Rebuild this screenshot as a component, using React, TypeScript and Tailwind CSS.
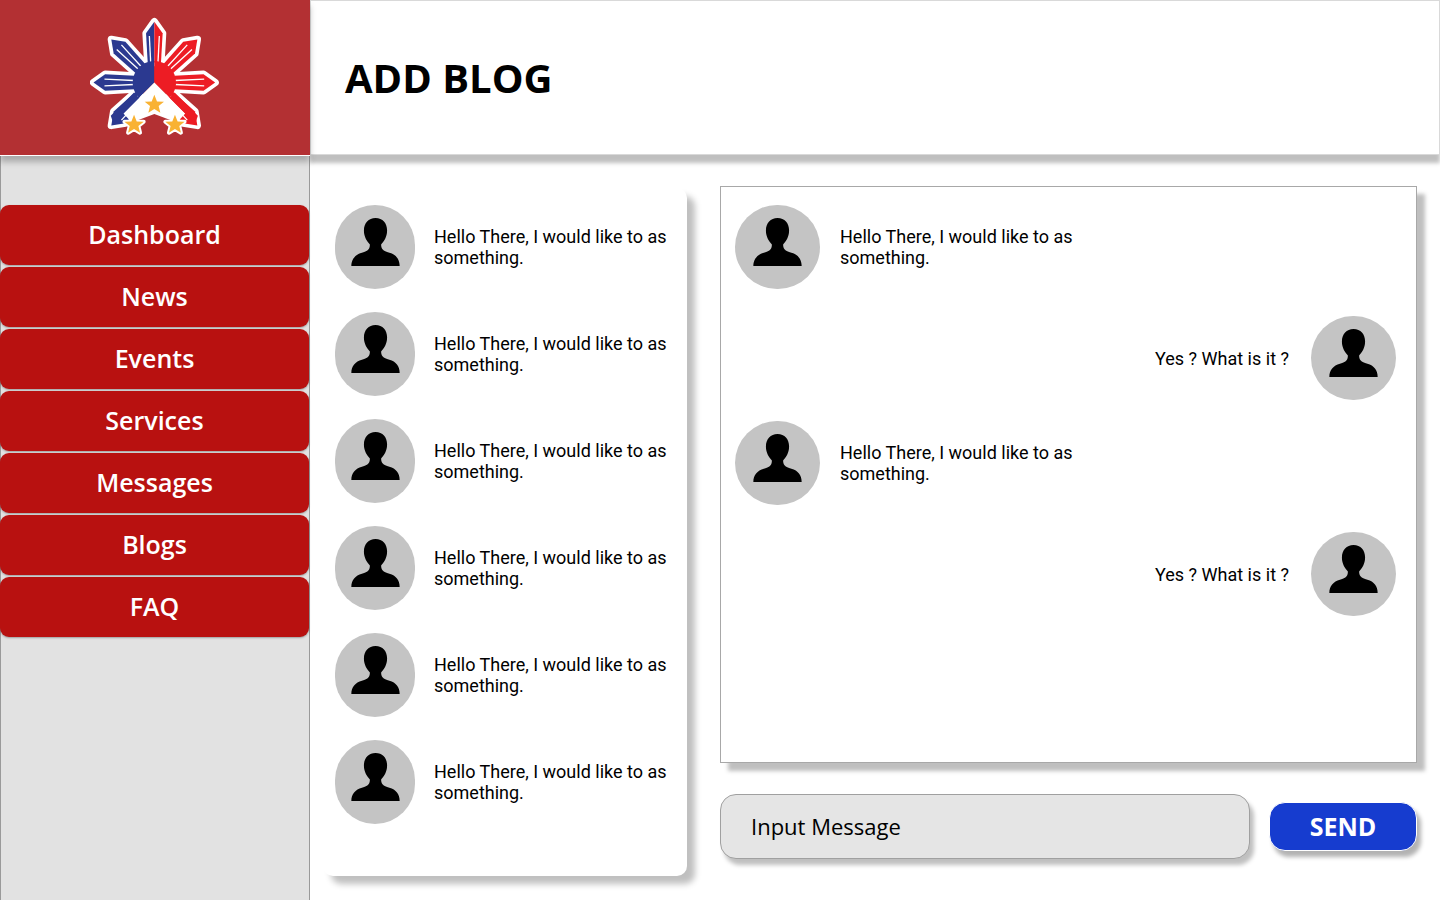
const navItems = ['Dashboard', 'News', 'Events', 'Services', 'Messages', 'Blogs', 'FAQ']
const inbox = [0, 1, 2, 3, 4, 5]

const headingFont = "font-['Open_Sans','Noto_Sans',sans-serif]"

function Ray({ angle, color }: { angle: number; color: string }) {
  return (
    <g transform={`translate(283 245) rotate(${angle})`}>
      <path d="M0 -183 L-25 -148 L-20 -60 L20 -60 L25 -148 Z" fill={color} />
      <path d="M-10 -150 L-6 -62 M10 -150 L6 -62" stroke="#fff" strokeWidth="4" fill="none" />
    </g>
  )
}

function Star({ x, y }: { x: number; y: number }) {
  return (
    <polygon
      transform={`translate(${x} ${y})`}
      points="0,-30 8,-10 29,-9 13,4 18,24 0,13 -18,24 -13,4 -29,-9 -8,-10"
      fill="#f9b233"
      stroke="#fff"
      strokeWidth="12"
      strokeLinejoin="round"
      paintOrder="stroke"
    />
  )
}

function Logo() {
  return (
    <svg viewBox="90 45 390 370" className="h-[123px] w-[130px]" aria-hidden>
      <g stroke="#fff" strokeWidth="22" strokeLinejoin="round">
        {[-135, -90, -45, 0, 45, 90, 135].map((a) => (
          <g key={a} transform={`translate(283 245) rotate(${a})`}>
            <path d="M0 -183 L-25 -148 L-20 -60 L20 -60 L25 -148 Z" fill="#fff" />
          </g>
        ))}
      </g>
      <Ray angle={-135} color="#2b3990" />
      <Ray angle={-90} color="#2b3990" />
      <Ray angle={-45} color="#2b3990" />
      <Ray angle={45} color="#ed1c24" />
      <Ray angle={90} color="#ed1c24" />
      <Ray angle={135} color="#ed1c24" />
      <path d="M283 62 L258 97 L263 185 L283 185 Z" fill="#2b3990" />
      <path d="M283 62 L308 97 L303 185 L283 185 Z" fill="#ed1c24" />
      <path d="M268 105 L272 185" stroke="#fff" strokeWidth="4" />
      <path d="M298 105 L294 185" stroke="#fff" strokeWidth="4" />
      <path d="M283 180 A65 65 0 0 0 237 291 L283 245 Z" fill="#2b3990" />
      <path d="M283 180 A65 65 0 0 1 329 291 L283 245 Z" fill="#ed1c24" />
      <path d="M283 245 L190 338 L215 365 L283 340 L351 365 L376 338 Z" fill="#fff" />
      <path d="M237 291 L160 368 L152 345 L222 275 Z" fill="#2b3990" />
      <path d="M329 291 L406 368 L414 345 L344 275 Z" fill="#ed1c24" />
      <Star x={283} y={312} />
      <Star x={222} y={372} />
      <Star x={345} y={372} />
    </svg>
  )
}

function Avatar({ wide }: { wide?: boolean }) {
  return (
    <div className={`flex h-[84px] shrink-0 items-center justify-center rounded-full bg-[#c4c4c4] ${wide ? 'w-[85px]' : 'w-[80px]'}`}>
      <svg viewBox="0 0 146 145" className="mb-[11px] h-[48px] w-[49px]" aria-hidden>
        <path d="M73 0 C95 0 108 15 108 38 C108 58 98 72 90 80 C90 92 95 100 115 105 C135 110 146 125 146 145 L0 145 C0 125 12 110 32 105 C52 100 56 92 56 80 C48 72 38 58 38 38 C38 15 52 0 73 0 Z" />
      </svg>
    </div>
  )
}

function Hello({ className }: { className: string }) {
  return (
    <p className={`w-[250px] text-[18px] leading-[21px] text-black ${className}`}>
      Hello There, I would like to as something.
    </p>
  )
}

function Reply() {
  return (
    <div className="flex items-center justify-end gap-[22px]">
      <p className="text-[18px] leading-[21px] text-black">Yes ? What is it ?</p>
      <Avatar wide />
    </div>
  )
}

export default function App() {
  return (
    <div className="flex h-[900px] w-[1440px] overflow-hidden bg-white font-['Roboto',sans-serif]">
      <aside className="relative z-10 flex h-full w-[310px] shrink-0 flex-col border-x border-[#9a9a9a] bg-[#e2e2e2]">
        <div className="-mx-px flex h-[156px] shrink-0 items-center justify-center border-b border-white bg-[#b33033] shadow-[0_6px_6px_rgba(0,0,0,0.25)]">
          <Logo />
        </div>
        <nav className="-ml-px mt-[49px] flex flex-col gap-[2px]">
          {navItems.map((item) => (
            <button
              key={item}
              type="button"
              className={`flex h-[60px] items-center justify-center rounded-[9px] bg-[#b81110] text-[25px] font-semibold text-white shadow-[0_1px_2px_rgba(0,0,0,0.3)] ${headingFont}`}
            >
              {item}
            </button>
          ))}
        </nav>
      </aside>

      <main className="flex min-w-0 flex-1 flex-col">
        <header className="flex h-[155px] shrink-0 items-center border border-[#d9d9d9] bg-white pl-[34px] shadow-[0_8px_4px_rgba(0,0,0,0.25)]">
          <h1 className={`text-[40px] font-bold leading-none text-black ${headingFont}`}>ADD BLOG</h1>
        </header>

        <div className="flex flex-1 pl-[13px] pt-[33px]">
          <section className="flex h-[688px] w-[364px] shrink-0 flex-col gap-[23px] rounded-[10px] bg-white pl-[12px] pt-[17px] shadow-[8px_8px_6px_rgba(0,0,0,0.25)]">
            {inbox.map((i) => (
              <div key={i} className="flex items-center gap-[19px]">
                <Avatar />
                <Hello className="" />
              </div>
            ))}
          </section>

          <div className="ml-[33px] flex w-[697px] flex-col">
            <section className="-mt-[2px] h-[577px] border border-[#a8a8a8] bg-white pl-[14px] pr-[20px] pt-[18px] shadow-[8px_8px_4px_rgba(0,0,0,0.25)]">
              <div className="flex items-center gap-[20px]">
                <Avatar wide />
                <Hello className="" />
              </div>
              <div className="mt-[27px]">
                <Reply />
              </div>
              <div className="mt-[21px] flex items-center gap-[20px]">
                <Avatar wide />
                <Hello className="" />
              </div>
              <div className="mt-[27px]">
                <Reply />
              </div>
            </section>

            <div className="mt-[31px] flex items-center gap-[19px]">
              <div className={`flex h-[65px] w-[530px] items-center rounded-[16px] border border-[#a0a0a0] bg-[#e5e5e5] pl-[30px] text-[22px] text-black shadow-[4px_6px_4px_rgba(0,0,0,0.25)] ${headingFont}`}>
                Input Message
              </div>
              <button
                type="button"
                className={`h-[49px] w-[148px] rounded-[16px] border border-white bg-[#163ccf] text-[25px] font-bold text-white shadow-[4px_6px_4px_rgba(0,0,0,0.3)] ${headingFont}`}
              >
                SEND
              </button>
            </div>
          </div>
        </div>
      </main>
    </div>
  )
}
